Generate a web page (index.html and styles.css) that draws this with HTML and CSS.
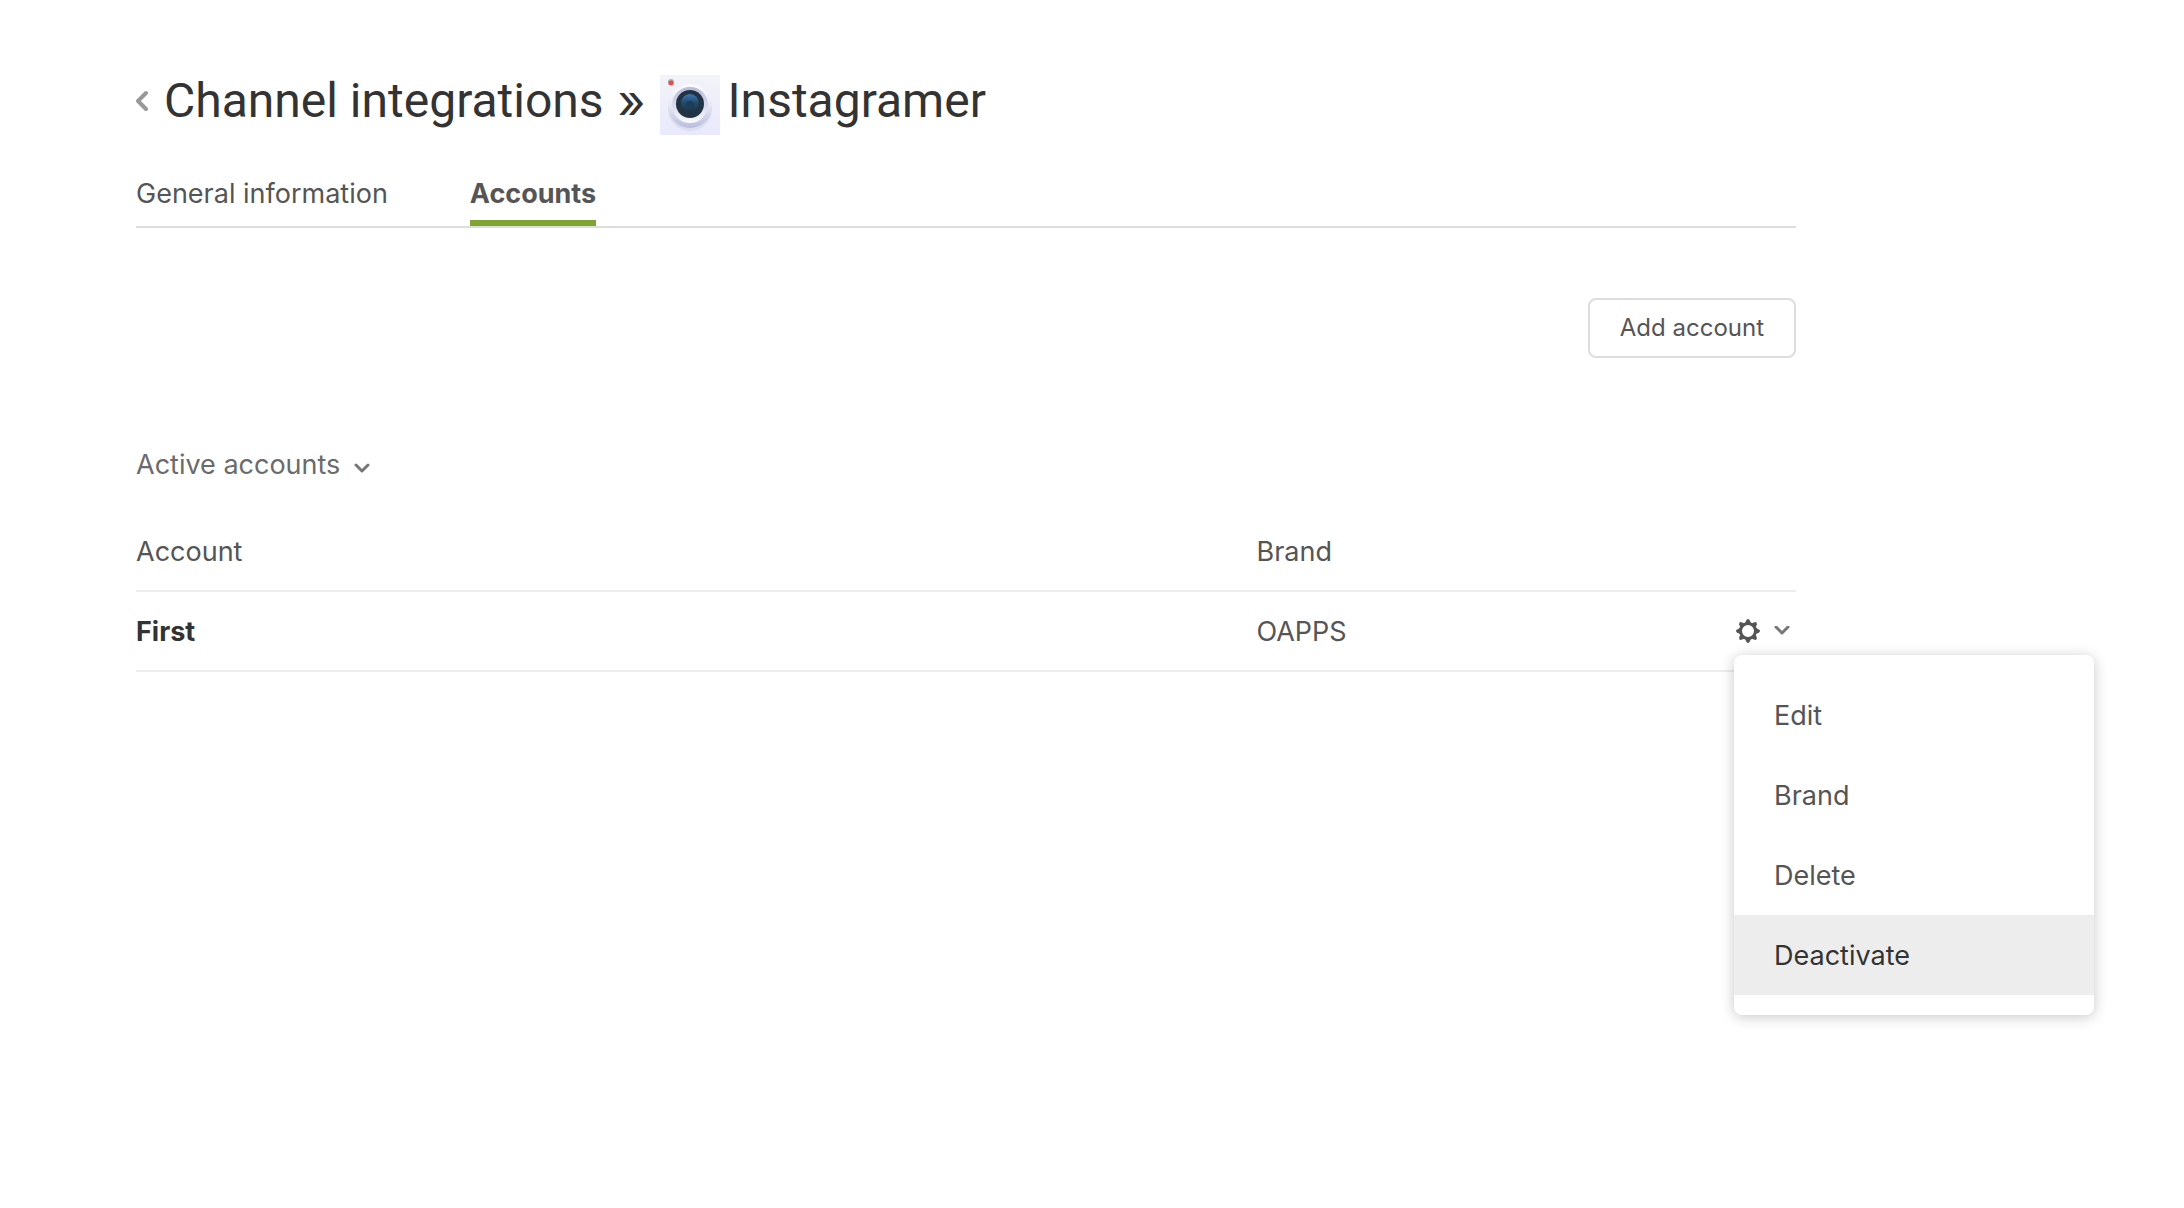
FILE: index.html
```html
<!DOCTYPE html>
<html lang="en">
<head>
	<meta charset="utf-8">
	<title>Channel integrations - Instagramer</title>
	<link rel="stylesheet" href="styles.css">
</head>
<body>
	<header class="page-header">
		<a href="#" class="back" aria-label="Back">
			<svg width="14" height="22" viewBox="0 0 14 22"><path d="M10 3L2 11l8 8" fill="none" stroke="#999" stroke-width="4" stroke-linecap="round" stroke-linejoin="round"/></svg>
		</a>
		<h1>
			<span>Channel integrations</span>
			<span class="separator">»</span>
			<svg class="app-logo" width="60" height="60" viewBox="0 0 60 60">
				<defs>
					<linearGradient id="bg" x1="0" y1="0" x2="0" y2="1">
						<stop offset="0" stop-color="#f3f3f9"/>
						<stop offset="1" stop-color="#e8e9fc"/>
					</linearGradient>
					<linearGradient id="rim" x1="0" y1="0" x2="0" y2="1">
						<stop offset="0" stop-color="#fcfcfe"/>
						<stop offset="0.5" stop-color="#e6e7f3"/>
						<stop offset="1" stop-color="#b9bedd"/>
					</linearGradient>
					<linearGradient id="ring" x1="0" y1="0" x2="0" y2="1">
						<stop offset="0" stop-color="#b6b9dc"/>
						<stop offset="1" stop-color="#fafafe"/>
					</linearGradient>
					<linearGradient id="glass" x1="0" y1="0" x2="0" y2="1">
						<stop offset="0" stop-color="#3b78b8"/>
						<stop offset="0.5" stop-color="#234866"/>
						<stop offset="1" stop-color="#1d3445"/>
					</linearGradient>
				</defs>
				<rect width="60" height="60" fill="url(#bg)"/>
				<circle cx="30" cy="34" r="22" fill="#dcdef0"/>
				<circle cx="30" cy="31" r="22" fill="url(#rim)"/>
				<circle cx="30" cy="30" r="18" fill="url(#ring)"/>
				<circle cx="30" cy="29" r="14" fill="#223443"/>
				<circle cx="30" cy="28" r="9" fill="url(#glass)"/>
				<circle cx="30" cy="30" r="4" fill="#1d3c57"/>
				<circle cx="11" cy="7" r="3" fill="#b5a9a9"/>
				<circle cx="11" cy="8" r="2.5" fill="#e0504c"/>
			</svg>
			<span>Instagramer</span>
		</h1>
	</header>

	<nav class="tabs">
		<a href="#">General information</a>
		<a href="#" class="active">Accounts</a>
	</nav>

	<div class="toolbar">
		<button type="button" class="btn">Add account</button>
	</div>

	<button type="button" class="section-toggle">
		Active accounts
		<svg width="16" height="10" viewBox="0 0 16 10"><path d="M2 2l6 6 6-6" fill="none" stroke="#777" stroke-width="3" stroke-linecap="round" stroke-linejoin="round"/></svg>
	</button>

	<table class="accounts">
		<thead>
			<tr>
				<th class="col-account">Account</th>
				<th>Brand</th>
				<th class="col-actions"></th>
			</tr>
		</thead>
		<tbody>
			<tr>
				<td class="name">First</td>
				<td>OAPPS</td>
				<td class="col-actions">
					<div class="actions">
						<button type="button" class="gear" aria-label="Account options">
							<svg width="24" height="24" viewBox="0 0 24 24">
								<circle cx="12" cy="12" r="7.5" fill="none" stroke="#555" stroke-width="3"/>
								<g fill="#555">
									<path id="tooth" d="M9 4l1.5-3q1.5-2 3 0l1.5 3z"/>
									<use href="#tooth" transform="rotate(45 12 12)"/>
									<use href="#tooth" transform="rotate(90 12 12)"/>
									<use href="#tooth" transform="rotate(135 12 12)"/>
									<use href="#tooth" transform="rotate(180 12 12)"/>
									<use href="#tooth" transform="rotate(225 12 12)"/>
									<use href="#tooth" transform="rotate(270 12 12)"/>
									<use href="#tooth" transform="rotate(315 12 12)"/>
								</g>
							</svg>
							<svg width="16" height="10" viewBox="0 0 16 10"><path d="M2 1l6 6 6-6" fill="none" stroke="#777" stroke-width="3" stroke-linecap="round" stroke-linejoin="round"/></svg>
						</button>
						<ul class="menu">
							<li><button type="button">Edit</button></li>
							<li><button type="button">Brand</button></li>
							<li><button type="button">Delete</button></li>
							<li><button type="button" class="hover">Deactivate</button></li>
						</ul>
					</div>
				</td>
			</tr>
		</tbody>
	</table>
</body>
</html>
```
FILE: styles.css
```css
* {
	box-sizing: border-box;
}
body {
	min-height: 100vh;
	margin: 0;
	/* room on the right for the open menu */
	padding: 67px 388px 72px 136px;
	background: #fff;
	color: #555;
	font-family: Inter, "Liberation Sans", sans-serif;
	font-size: 27px;
	line-height: 40px;
}
button {
	font: inherit;
	color: inherit;
	background: none;
	border: 0;
	padding: 0;
	cursor: pointer;
}
svg {
	display: block;
}
.page-header {
	display: flex;
	align-items: center;
	gap: 14px;
}
h1 {
	display: flex;
	align-items: center;
	gap: 8px;
	margin: 0;
	color: #333;
	font-family: Roboto, "Liberation Sans", sans-serif;
	font-size: 48px;
	font-weight: 400;
	line-height: 60px;
}
.separator {
	margin: 0 6px;
	font-family: Inter, "Liberation Sans", sans-serif;
}
.app-logo {
	margin-top: 8px;
}
.tabs {
	display: flex;
	gap: 82px;
	margin-top: 38px;
	border-bottom: 2px solid #ddd;
}
.tabs a {
	padding: 1px 0 6px;
	border-bottom: 6px solid transparent;
	color: #555;
	text-decoration: none;
}
.tabs .active {
	border-color: #7fa530;
	font-weight: 700;
}
.toolbar {
	display: flex;
	justify-content: flex-end;
	margin-top: 70px;
}
.btn {
	height: 60px;
	padding: 0 30px;
	border: 2px solid #ddd;
	border-radius: 8px;
	font-size: 24px;
}
.section-toggle {
	display: flex;
	align-items: center;
	gap: 14px;
	margin-top: 87px;
	color: #6b6b6b;
}
.section-toggle svg {
	margin-top: 6px;
}
.accounts {
	width: 100%;
	margin-top: 27px;
	border-collapse: separate;
	border-spacing: 0;
	table-layout: fixed;
}
th,
td {
	height: 80px;
	padding: 2px 0 0;
	border-bottom: 2px solid #ededed;
	font-weight: 400;
	text-align: left;
}
.col-account {
	width: 67.5%;
}
.col-actions {
	width: 62px;
	padding: 0;
}
.name {
	color: #333;
	font-weight: 700;
}
.actions {
	position: relative;
}
.gear {
	display: flex;
	align-items: center;
	gap: 14px;
	height: 48px;
	padding-left: 2px;
}
.menu {
	position: absolute;
	top: 100%;
	left: 0;
	width: 360px;
	margin: 0;
	padding: 20px 0;
	background: #fff;
	border-radius: 8px;
	box-shadow: 0 2px 14px rgba(0, 0, 0, 0.22);
	list-style: none;
}
.menu button {
	display: block;
	width: 100%;
	height: 80px;
	padding: 2px 40px 0;
	text-align: left;
}
.menu .hover {
	background: #ededed;
	color: #333;
}
```
